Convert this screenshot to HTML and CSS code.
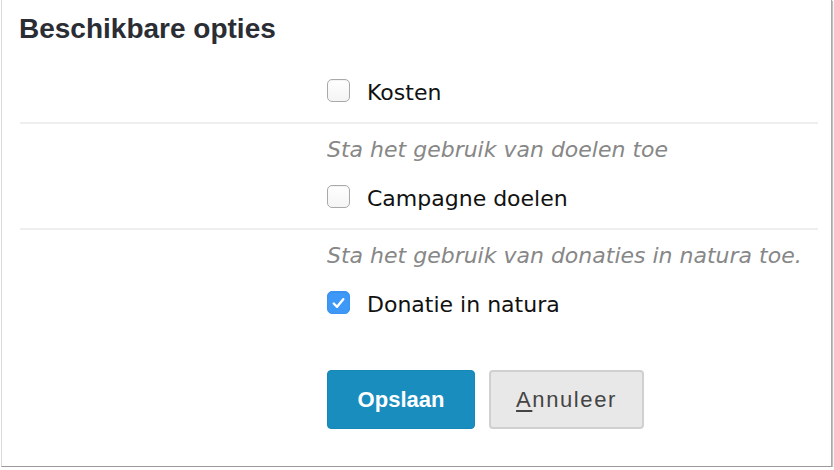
FILE: index.html
```html
<!DOCTYPE html>
<html lang="nl">
<head>
<meta charset="utf-8">
<title>Beschikbare opties</title>
<link rel="stylesheet" href="styles.css">
</head>
<body>
<div class="panel">
  <h2 class="title">Beschikbare opties</h2>
  <div class="row first">
    <div class="label-col"></div>
    <div class="control-col">
      <label class="option"><span class="box"></span><span class="text">Kosten</span></label>
    </div>
  </div>
  <div class="row">
    <div class="label-col"></div>
    <div class="control-col">
      <p class="help">Sta het gebruik van doelen toe</p>
      <label class="option"><span class="box"></span><span class="text">Campagne doelen</span></label>
    </div>
  </div>
  <div class="row last">
    <div class="label-col"></div>
    <div class="control-col">
      <p class="help">Sta het gebruik van donaties in natura toe.</p>
      <label class="option"><span class="box checked"><svg viewBox="0 0 22 22" width="22" height="22"><path d="M6 11.5 L9.5 15 L16 7" fill="none" stroke="#fff" stroke-width="2.5" stroke-linecap="round" stroke-linejoin="round"/></svg></span><span class="text">Donatie in natura</span></label>
      <div class="actions">
        <button class="btn primary" type="button">Opslaan</button>
        <button class="btn secondary" type="button"><span class="u">A</span>nnuleer</button>
      </div>
    </div>
  </div>
</div>
</body>
</html>
```
FILE: styles.css
```css
html, body {
  margin: 0;
  padding: 0;
  background: #fff;
}
.panel {
  margin-left: 1px;
  width: 829px;
  height: 466px;
  border-left: 1px solid #d9d9d9;
  border-right: 1px solid #a9a9a9;
  border-bottom: 1px solid #9a9a9a;
  box-shadow: 1px 1px 1px rgba(0,0,0,0.25);
  background: #fff;
  box-sizing: content-box;
}
.title {
  margin: 0;
  padding: 13px 0 0 17px;
  font-family: "Liberation Sans", Arial, sans-serif;
  font-weight: bold;
  font-size: 28px;
  line-height: 32px;
  color: #2b2d35;
}
.row {
  display: grid;
  grid-template-columns: 307px 1fr;
  margin: 0 13px 0 18px;
  padding: 12px 0 15px;
  border-bottom: 2px solid #eeeeee;
}
.row.first {
  padding-top: 34px;
}
.row.last {
  border-bottom: none;
}
.help {
  margin: 0 0 21px;
  font-family: "DejaVu Sans", Verdana, sans-serif;
  font-style: italic;
  font-size: 22px;
  line-height: 28px;
  color: #878787;
}
.option {
  display: flex;
  align-items: flex-start;
  gap: 17px;
  font-family: "DejaVu Sans", Verdana, sans-serif;
  font-size: 22px;
  line-height: 28px;
  color: #111;
}
.box {
  flex: none;
  width: 21px;
  height: 21px;
  border: 1px solid #a9a9a9;
  border-radius: 5px;
  background: linear-gradient(#fff, #f4f4f4);
  box-shadow: inset 0 1px 1px rgba(0,0,0,0.05);
  display: flex;
  align-items: center;
  justify-content: center;
}
.box.checked {
  border-color: #3a92f2;
  background: #3d98f7;
}
.box svg {
  display: block;
}
.actions {
  display: flex;
  gap: 14px;
  margin-top: 51px;
}
.btn {
  height: 59px;
  border-radius: 4px;
  font-family: "Liberation Sans", Arial, sans-serif;
  font-size: 22px;
  padding: 0;
  margin: 0;
  cursor: pointer;
}
.btn.primary {
  width: 148px;
  background: #1a8dbf;
  border: 1px solid #1787b8;
  color: #fff;
  font-weight: bold;
}
.btn.secondary {
  width: 155px;
  background: #e8e8e8;
  border: 2px solid #d0d0d0;
  color: #444;
  letter-spacing: 1.6px;
}
.u {
  text-decoration: underline;
  text-underline-offset: 3px;
}
```
